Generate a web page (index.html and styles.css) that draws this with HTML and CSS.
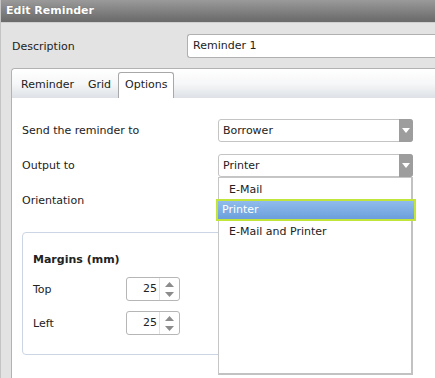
FILE: index.html
```html
<!DOCTYPE html>
<html>
<head>
<meta charset="utf-8">
<link rel="stylesheet" href="styles.css">
</head>
<body>
<div class="window">
  <div class="titlebar">Edit Reminder</div>
  <div class="content">
    <div class="desc-row">
      <span class="desc-label">Description</span>
      <div class="textbox">Reminder 1</div>
    </div>
    <div class="tabctl">
      <div class="tabstrip">
        <div class="tab">Reminder</div>
        <div class="tab">Grid</div>
        <div class="tab active">Options</div>
      </div>
      <div class="panel">
        <div class="row">
          <span class="lbl">Send the reminder to</span>
          <div class="combo">
            <span class="combo-text">Borrower</span>
            <span class="combo-btn"><svg width="8" height="5" viewBox="0 0 8 5"><path d="M0 0H8L4 5Z" fill="#fff"/></svg></span>
          </div>
        </div>
        <div class="row">
          <span class="lbl">Output to</span>
          <div class="combo">
            <span class="combo-text">Printer</span>
            <span class="combo-btn"><svg width="8" height="5" viewBox="0 0 8 5"><path d="M0 0H8L4 5Z" fill="#fff"/></svg></span>
            <div class="dropdown">
              <div class="item">E-Mail</div>
              <div class="item selected">Printer</div>
              <div class="item">E-Mail and Printer</div>
            </div>
          </div>
        </div>
        <div class="row">
          <span class="lbl">Orientation</span>
        </div>
        <div class="group">
          <div class="group-title">Margins (mm)</div>
          <div class="spin-row first">
            <span class="spin-lbl">Top</span>
            <div class="spinner">
              <span class="spin-val">25</span>
              <span class="spin-btns">
                <svg width="9" height="5" viewBox="0 0 9 5"><path d="M0 5H9L4.5 0Z" fill="#8c8c8c"/></svg>
                <svg width="9" height="5" viewBox="0 0 9 5"><path d="M0 0H9L4.5 5Z" fill="#8c8c8c"/></svg>
              </span>
            </div>
          </div>
          <div class="spin-row">
            <span class="spin-lbl">Left</span>
            <div class="spinner">
              <span class="spin-val">25</span>
              <span class="spin-btns">
                <svg width="9" height="5" viewBox="0 0 9 5"><path d="M0 5H9L4.5 0Z" fill="#8c8c8c"/></svg>
                <svg width="9" height="5" viewBox="0 0 9 5"><path d="M0 0H9L4.5 5Z" fill="#8c8c8c"/></svg>
              </span>
            </div>
          </div>
        </div>
      </div>
    </div>
  </div>
</div>
</body>
</html>
```

FILE: styles.css
```css
* { box-sizing: border-box; }
html, body {
  margin: 0;
  padding: 0;
  width: 435px;
  height: 378px;
  overflow: hidden;
}
body {
  font-family: "DejaVu Sans", Verdana, sans-serif;
  font-size: 11px;
  color: #222;
  background: #e3e3e3;
}
.window {
  height: 378px;
  border-left: 1px solid #c4c4c4;
  display: flex;
  flex-direction: column;
}
.titlebar {
  height: 23px;
  line-height: 22px;
  padding-left: 5px;
  font-weight: bold;
  color: #fff;
  background: linear-gradient(#9a9a9a, #707070 85%, #6a6a6a);
  border-bottom: 1px solid #cfcfcf;
  text-shadow: 0 0 1px rgba(0,0,0,0.3);
}
.content {
  flex: 1;
  display: flex;
  flex-direction: column;
}
.desc-row {
  display: flex;
  align-items: center;
  margin-top: 11px;
  margin-bottom: 10px;
  padding-left: 11px;
}
.desc-label {
  width: 175px;
  flex: none;
}
.textbox {
  flex: 1;
  height: 24px;
  line-height: 22px;
  padding-left: 5px;
  background: #fff;
  border: 1px solid #b0b0b0;
  border-right: none;
  border-radius: 3px 0 0 3px;
}
.tabctl {
  flex: 1;
  margin-left: 10px;
  border-left: 1px solid #b2b2b2;
  border-top: 1px solid #b2b2b2;
  border-top-left-radius: 4px;
  display: flex;
  flex-direction: column;
  background: #fff;
}
.tabstrip {
  height: 29px;
  display: flex;
  align-items: flex-end;
  padding-left: 2px;
  background: linear-gradient(#ffffff, #f6f7f8 50%, #dde1e6);
  border-top-left-radius: 4px;
}
.tab {
  height: 26px;
  line-height: 24px;
  padding: 0 6px;
  border: 1px solid transparent;
  border-bottom: none;
}
.tab.active {
  background: #fff;
  border-color: #a8a8a8;
  border-radius: 3px 3px 0 0;
}
.panel {
  flex: 1;
  background: #fff;
  padding: 21px 0 0 10px;
  display: flex;
  flex-direction: column;
  align-items: flex-start;
}
.row {
  display: flex;
  align-items: center;
  height: 23px;
  margin-bottom: 12px;
}
.lbl {
  width: 196px;
  flex: none;
}
.combo {
  position: relative;
  width: 195px;
  height: 23px;
  display: flex;
  align-items: stretch;
  background: #fff;
  border: 1px solid #c4c4c4;
  border-radius: 3px;
}
.combo-text {
  flex: 1;
  line-height: 21px;
  padding-left: 4px;
}
.combo-btn {
  width: 14px;
  margin: -1px -1px -1px 0;
  background: #9d9d9d;
  border-radius: 0 3px 3px 0;
  display: flex;
  align-items: center;
  justify-content: center;
}
.dropdown {
  position: absolute;
  top: calc(100% + 1px);
  left: -1px;
  width: 195px;
  height: 198px;
  background: #fff;
  border: 1px solid #c6c6c6;
  border-right: 2px solid #c2c2c2;
  border-bottom: 2px solid #c2c2c2;
  padding-top: 1px;
  z-index: 5;
}
.item {
  height: 21px;
  line-height: 21px;
  padding-left: 10px;
}
.item.selected {
  height: 22px;
  line-height: 18px;
  margin: -1px -5px 0 -3px;
  padding-left: 4px;
  color: #fff;
  border: 2px solid #c2e53a;
  background: linear-gradient(#90bcec, #6b9fdc);
}
.group {
  margin-top: 8px;
  width: 280px;
  border: 1px solid #cbd5e4;
  border-radius: 4px;
  padding: 19px 0 19px 10px;
}
.group-title {
  font-weight: bold;
  line-height: 16px;
  margin-bottom: 9px;
}
.spin-row {
  display: flex;
  align-items: center;
  height: 24px;
  margin-top: 10px;
}
.spin-row.first {
  margin-top: 0;
}
.spin-lbl {
  width: 93px;
  flex: none;
}
.spinner {
  width: 54px;
  height: 24px;
  display: flex;
  border: 1px solid #b6b6b6;
  border-radius: 3px;
  background: #fff;
}
.spin-val {
  width: 32px;
  text-align: right;
  padding-right: 2px;
  line-height: 22px;
}
.spin-btns {
  flex: 1;
  border-left: 1px solid #e2e2e2;
  display: flex;
  flex-direction: column;
  align-items: center;
  justify-content: space-between;
  padding: 4px 0 3px;
}
.spin-btns svg { display: block; }
```
